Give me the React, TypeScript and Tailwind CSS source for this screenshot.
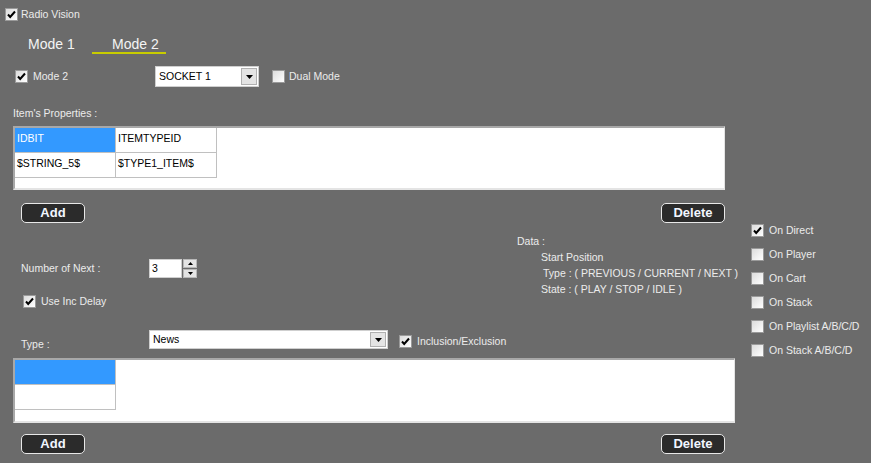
import React from 'react';

const Check = ({ checked }: { checked?: boolean }) => (
  <div className="w-[13px] h-[13px] shrink-0 border border-[#9a9a9a] bg-gradient-to-br from-[#dcdcdc] to-white flex items-center justify-center">
    {checked && (
      <svg width="9" height="9" viewBox="0 0 9 9">
        <polyline points="1,4.5 3.2,7 8,1.5" fill="none" stroke="#000" strokeWidth="2" />
      </svg>
    )}
  </div>
);

const CheckLabel = ({ checked, label, gap = 'gap-[5px]' }: { checked?: boolean; label: string; gap?: string }) => (
  <div className={`flex items-center ${gap}`}>
    <Check checked={checked} />
    <span className="leading-[13px] whitespace-nowrap">{label}</span>
  </div>
);

const Arrow = () => (
  <div className="w-[16px] h-full bg-[#e4e4e4] border border-[#b0b0b0] flex items-center justify-center">
    <svg width="7" height="4" viewBox="0 0 7 4">
      <polygon points="0,0 7,0 3.5,4" fill="#000" />
    </svg>
  </div>
);

const Select = ({ value, w, h }: { value: string; w: string; h: string }) => (
  <div className={`${w} ${h} bg-white border border-[#cfcfcf] flex items-stretch p-[1px] text-black`}>
    <div className="flex-1 pl-[2px] flex items-center leading-[13px]">{value}</div>
    <Arrow />
  </div>
);

const Button = ({ label }: { label: string }) => (
  <button className="w-[64px] h-[20px] rounded-[5px] bg-[#2b2b2b] border border-[#e8e8e8] text-[13px] font-bold text-[#f2f6ff] leading-[18px]">
    {label}
  </button>
);

const Grid = ({ rows, w, h }: { rows: string[][]; w: string; h: string }) => (
  <div className={`${w} ${h} bg-white border-t-2 border-l-2 border-t-[#a8a8a8] border-l-[#a8a8a8] border-r border-b-2 border-r-[#e4e4e4] border-b-[#e4e4e4]`}>
    <div className="flex flex-col w-[202px] text-black">
      {rows.map((r, i) => (
        <div key={i} className="flex h-[25px]">
          {r.map((c, j) => (
            <div
              key={j}
              className={`w-[101px] h-[25px] border-r border-b border-[#c0c0c0] pl-[2px] pt-[4px] leading-[13px] ${
                i === 0 && j === 0 ? 'bg-[#3399ff] text-white' : ''
              }`}
            >
              {c}
            </div>
          ))}
        </div>
      ))}
    </div>
  </div>
);

export default function App() {
  return (
    <div className="w-[871px] h-[463px] overflow-hidden bg-[#6b6b6b] text-[10.5px] text-[#ececec] font-['Liberation_Sans',Arial,sans-serif] flex">
      <div className="w-[751px] shrink-0 pl-[5px] pt-[8px] flex flex-col">
        <CheckLabel checked label="Radio Vision" gap="gap-[3px]" />

        <div className="flex mt-[16px] text-[14px] leading-[14px] text-[#f4f4f4]">
          <div className="ml-[23px] w-[64px]">Mode 1</div>
          <div className="w-[74px] pl-[20px] border-b-2 border-[#c8cc00] pb-[1px]">Mode 2</div>
        </div>

        <div className="flex items-center mt-[12px] ml-[10px]">
          <div className="w-[140px]">
            <CheckLabel checked label="Mode 2" />
          </div>
          <Select value="SOCKET 1" w="w-[104px]" h="h-[21px]" />
          <div className="ml-[13px]">
            <CheckLabel label="Dual Mode" gap="gap-[4px]" />
          </div>
        </div>

        <div className="ml-[8px] mt-[20px] leading-[13px]">Item's Properties :</div>

        <div className="ml-[8px] mt-[6px]">
          <Grid
            w="w-[712px]"
            h="h-[64px]"
            rows={[
              ['IDBIT', 'ITEMTYPEID'],
              ['$STRING_5$', '$TYPE1_ITEM$'],
            ]}
          />
        </div>

        <div className="ml-[16px] mt-[13px] w-[704px] flex justify-between">
          <Button label="Add" />
          <Button label="Delete" />
        </div>

        <div className="flex items-start">
          <div className="w-[512px] flex flex-col">
            <div className="flex items-center mt-[36px] ml-[16px]">
              <div className="w-[128px] leading-[13px]">Number of Next :</div>
              <div className="w-[33px] h-[19px] bg-white border border-[#cfcfcf] text-black pl-[2px] flex items-center">
                3
              </div>
              <div className="flex flex-col ml-[1px] gap-[1px]">
                <div className="w-[14px] h-[9px] bg-[#e4e4e4] border border-[#b8b8b8] flex items-center justify-center">
                  <svg width="5" height="3" viewBox="0 0 5 3"><polygon points="2.5,0 5,3 0,3" fill="#000" /></svg>
                </div>
                <div className="w-[14px] h-[9px] bg-[#e4e4e4] border border-[#b8b8b8] flex items-center justify-center">
                  <svg width="5" height="3" viewBox="0 0 5 3"><polygon points="0,0 5,0 2.5,3" fill="#000" /></svg>
                </div>
              </div>
            </div>

            <div className="ml-[18px] mt-[17px]">
              <CheckLabel checked label="Use Inc Delay" />
            </div>

            <div className="flex items-start mt-[22px] ml-[16px]">
              <div className="w-[128px] mt-[8px] leading-[13px]">Type :</div>
              <Select value="News" w="w-[239px]" h="h-[19px]" />
              <div className="ml-[11px] mt-[5px]">
                <CheckLabel checked label="Inclusion/Exclusion" />
              </div>
            </div>
          </div>

          <div className="mt-[10px] leading-[16px] flex flex-col">
            <div>Data :</div>
            <div className="ml-[24px]">Start Position</div>
            <div className="ml-[26px]">Type : ( PREVIOUS / CURRENT / NEXT )</div>
            <div className="ml-[24px]">State : ( PLAY / STOP / IDLE )</div>
          </div>
        </div>

        <div className="ml-[8px] mt-[7px]">
          <Grid w="w-[722px]" h="h-[65px]" rows={[[''], ['']]} />
        </div>

        <div className="ml-[16px] mt-[11px] w-[704px] flex justify-between">
          <Button label="Add" />
          <Button label="Delete" />
        </div>
      </div>

      <div className="pt-[224px] flex flex-col gap-[11px]">
        <CheckLabel checked label="On Direct" />
        <CheckLabel label="On Player" />
        <CheckLabel label="On Cart" />
        <CheckLabel label="On Stack" />
        <CheckLabel label="On Playlist A/B/C/D" />
        <CheckLabel label="On Stack A/B/C/D" />
      </div>
    </div>
  );
}
